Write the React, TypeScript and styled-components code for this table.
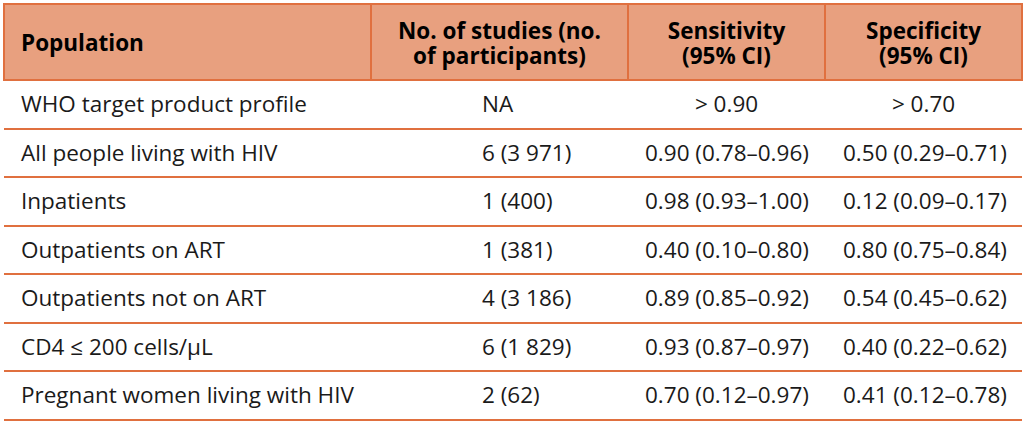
import React from "react";
import styled, { createGlobalStyle } from "styled-components";

const Global = createGlobalStyle`
  html, body { margin: 0; padding: 0; background: #ffffff; }
  body { font-family: "Open Sans", "Noto Sans", sans-serif; }
`;

const ORANGE = "#e0703f";
const HEAD_BG = "#e8a07f";

const Page = styled.div`
  padding: 3px 3px 0 3px;
`;

const Table = styled.table`
  width: 1018px;
  border-collapse: collapse;
  table-layout: fixed;
  font-size: 22.5px;
  color: #1a1a1a;
`;

const HeadCell = styled.th<{ $align?: "left" | "center" }>`
  background: ${HEAD_BG};
  border: 2px solid ${ORANGE};
  height: 73px;
  padding: 1px 16px 0;
  font-weight: 700;
  line-height: 25px;
  color: #000;
  text-align: ${(p) => p.$align ?? "center"};
  vertical-align: middle;
`;

const Cell = styled.td<{ $pad?: number; $center?: boolean }>`
  border-bottom: 2px solid ${ORANGE};
  height: 46.5px;
  padding: 0 0 0 ${(p) => p.$pad ?? 17}px;
  text-align: ${(p) => (p.$center ? "center" : "left")};
  vertical-align: middle;
  white-space: nowrap;
  line-height: 28px;
  font-weight: 400;
`;

type Row = { pop: string; n: string; sens: string; spec: string; center?: boolean };

const rows: Row[] = [
  { pop: "WHO target product profile", n: "NA", sens: "> 0.90", spec: "> 0.70", center: true },
  { pop: "All people living with HIV", n: "6 (3 971)", sens: "0.90 (0.78–0.96)", spec: "0.50 (0.29–0.71)" },
  { pop: "Inpatients", n: "1 (400)", sens: "0.98 (0.93–1.00)", spec: "0.12 (0.09–0.17)" },
  { pop: "Outpatients on ART", n: "1 (381)", sens: "0.40 (0.10–0.80)", spec: "0.80 (0.75–0.84)" },
  { pop: "Outpatients not on ART", n: "4 (3 186)", sens: "0.89 (0.85–0.92)", spec: "0.54 (0.45–0.62)" },
  { pop: "CD4 ≤ 200 cells/μL", n: "6 (1 829)", sens: "0.93 (0.87–0.97)", spec: "0.40 (0.22–0.62)" },
  { pop: "Pregnant women living with HIV", n: "2 (62)", sens: "0.70 (0.12–0.97)", spec: "0.41 (0.12–0.78)" },
];

export default function App() {
  return (
    <Page>
      <Global />
      <Table>
        <colgroup>
          <col style={{ width: 367 }} />
          <col style={{ width: 257 }} />
          <col style={{ width: 197 }} />
          <col style={{ width: 197 }} />
        </colgroup>
        <thead>
          <tr>
            <HeadCell $align="left">Population</HeadCell>
            <HeadCell>
              No. of studies (no.
              <br />
              of participants)
            </HeadCell>
            <HeadCell>
              Sensitivity
              <br />
              (95% CI)
            </HeadCell>
            <HeadCell>
              Specificity
              <br />
              (95% CI)
            </HeadCell>
          </tr>
        </thead>
        <tbody>
          {rows.map((r) => (
            <tr key={r.pop}>
              <Cell>{r.pop}</Cell>
              <Cell $pad={111}>{r.n}</Cell>
              <Cell $center={r.center} $pad={r.center ? 0 : 17}>{r.sens}</Cell>
              <Cell $center={r.center} $pad={r.center ? 0 : 18}>{r.spec}</Cell>
            </tr>
          ))}
        </tbody>
      </Table>
    </Page>
  );
}
